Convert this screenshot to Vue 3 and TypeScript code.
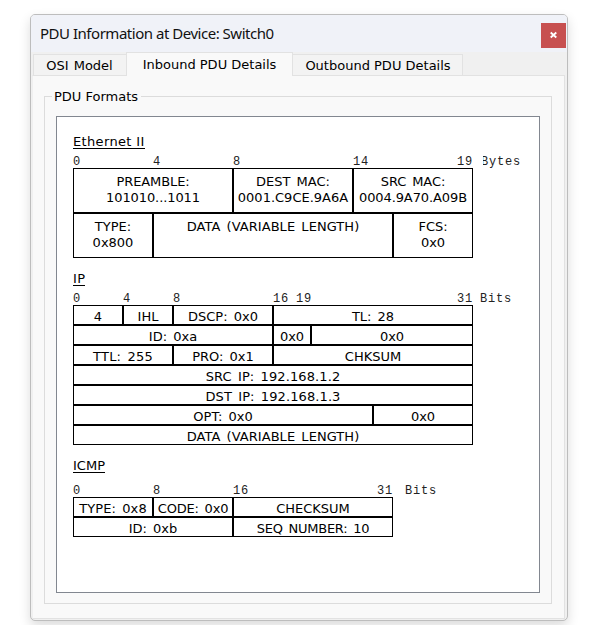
<script setup lang="ts">
interface Tick { label: string; width: number; clipped?: boolean }
interface Field { lines: string[]; width: number; spacing: number }
interface Format { name: string; key: string; ticks: Tick[]; rows: Field[][] }

const f = (text: string, width: number, spacing = 0): Field => ({ lines: text.split('|'), width, spacing })
const t = (label: string, width: number, clipped = false): Tick => ({ label, width, clipped })

const formats: Format[] = [
  {
    name: 'Ethernet II',
    key: 'ethernet',
    ticks: [t('0', 80), t('4', 80), t('8', 120), t('14', 104), t('19', 23), t('Bytes', 44, true)],
    rows: [
      [f('PREAMBLE:|101010...1011', 160, -0.1), f('DEST MAC:|0001.C9CE.9A6A', 120), f('SRC MAC:|0004.9A70.A09B', 120, -0.1)],
      [f('TYPE:|0x800', 80), f('DATA (VARIABLE LENGTH)', 240, 0.05), f('FCS:|0x0', 80)],
    ],
  },
  {
    name: 'IP',
    key: 'ip',
    ticks: [t('0', 50), t('4', 50), t('8', 100), t('16', 23), t('19', 161), t('31', 23), t('Bits', 40)],
    rows: [
      [f('4', 50), f('IHL', 50), f('DSCP: 0x0', 100), f('TL: 28', 200)],
      [f('ID: 0xa', 200), f('0x0', 38), f('0x0', 162)],
      [f('TTL: 255', 100, 0.2), f('PRO: 0x1', 100), f('CHKSUM', 200)],
      [f('SRC IP: 192.168.1.2', 400, 0.1)],
      [f('DST IP: 192.168.1.3', 400, 0.1)],
      [f('OPT: 0x0', 300), f('0x0', 100)],
      [f('DATA (VARIABLE LENGTH)', 400, 0.05)],
    ],
  },
  {
    name: 'ICMP',
    key: 'icmp',
    ticks: [t('0', 80), t('8', 80), t('16', 144), t('31', 28), t('Bits', 40)],
    rows: [
      [f('TYPE: 0x8', 80, 0.1), f('CODE: 0x0', 80, -0.2), f('CHECKSUM', 160)],
      [f('ID: 0xb', 160), f('SEQ NUMBER: 10', 160, -0.25)],
    ],
  },
]
</script>

<template>
  <main class="desktop">
    <section class="window">
      <header class="titlebar">
        <h1 class="title">PDU Information at Device: Switch0</h1>
        <button class="close" aria-label="Close">
          <svg width="25" height="25" viewBox="0 0 25 25"><path d="M9.7 9.5l5.6 5M15.3 9.5l-5.6 5" stroke="#fff" stroke-width="1.8" /></svg>
        </button>
      </header>
      <nav class="tabs">
        <span class="tab osi">OSI Model</span>
        <span class="tab inbound">Inbound PDU Details</span>
        <span class="tab outbound">Outbound PDU Details</span>
      </nav>
      <div class="pane">
        <div class="group">
          <div class="legend"><span class="legend-text">PDU Formats</span></div>
          <div class="group-body">
            <div class="sheet">
              <section v-for="fmt in formats" :key="fmt.key" :class="['format', fmt.key]">
                <h2 class="name"><span>{{ fmt.name }}</span></h2>
                <div class="ruler">
                  <span v-for="(tick, i) in fmt.ticks" :key="i" :class="['tick', { clipped: tick.clipped }]" :style="{ width: tick.width + 'px' }">{{ tick.label }}</span>
                </div>
                <div v-for="(row, r) in fmt.rows" :key="r" class="row">
                  <div v-for="(field, c) in row" :key="c" class="field" :style="{ width: field.width + 'px', letterSpacing: field.spacing + 'px' }">
                    <span v-for="line in field.lines" :key="line" class="line">{{ line }}</span>
                  </div>
                </div>
              </section>
            </div>
          </div>
        </div>
      </div>
    </section>
  </main>
</template>

<style>
body { background: #fff; overflow: hidden; }
</style>

<style scoped>
* { box-sizing: border-box; }
.desktop {
  width: 598px;
  height: 625px;
  padding: 14px 30px 4px;
  overflow: hidden;
  font: 13px/16px Verdana, "DejaVu Sans", sans-serif;
  color: #000;
}
.window {
  display: flex;
  flex-direction: column;
  width: 538px;
  height: 607px;
  border: 1px solid #bdbdbd;
  border-radius: 5px;
  background: #f0f0f0;
  box-shadow: 0 5px 12px rgba(0, 0, 0, 0.14);
  overflow: hidden;
}
.titlebar {
  display: flex;
  justify-content: space-between;
  height: 37px;
  flex: none;
  padding: 8px 1px 0 9px;
  background: #f0f2f8;
}
.title {
  margin: 0;
  font: 400 15px/20px "Segoe UI", "Noto Sans", sans-serif;
  white-space: nowrap;
  letter-spacing: -0.48px;
  color: #111;
}
.close {
  width: 25px;
  height: 25px;
  padding: 0;
  border: 0;
  background: #c75050;
}
.close svg { display: block; }
.tabs {
  display: flex;
  align-items: flex-end;
  flex: none;
  height: 23px;
  padding-left: 2px;
}
.tab {
  height: 21px;
  padding-top: 3px;
  border: 1px solid #e2e2e2;
  border-bottom: 0;
  background: #f3f3f3;
  text-align: center;
  white-space: nowrap;
}
.osi { width: 93px; padding-right: 1px; border-right: 0; word-spacing: 1px; }
.inbound {
  position: relative;
  z-index: 1;
  width: 167px;
  height: 24px;
  padding-top: 4px;
  margin-bottom: -1px;
  background: #f9f9f9;
}
.outbound { width: 170px; padding-left: 1px; border-left: 0; }
.pane {
  flex: 1;
  margin: 0 2px 1px 1px;
  padding: 12px 12px 14px 11px;
  border: 1px solid #e2e2e2;
  border-left-color: #f0f0f0;
  background: #f9f9f9;
}
.group { display: flex; flex-direction: column; width: 508px; height: 516px; }
.legend { display: flex; align-items: center; height: 16px; flex: none; }
.legend::before, .legend::after { content: ""; height: 1px; background: #dcdcdc; }
.legend::before { width: 8px; }
.legend::after { flex: 1; }
.legend-text { padding: 2px 3px 0 2px; white-space: nowrap; }
.group-body {
  flex: 1;
  margin-top: -7px;
  padding: 19px 11px 10px;
  border: 1px solid #dcdcdc;
  border-top: 0;
}
.sheet {
  width: 484px;
  height: 477px;
  padding: 17px 16px;
  border: 1px solid #828790;
  background: #fff;
}
.name {
  display: flex;
  margin: 0;
  height: 16px;
  font: inherit;
}
.name span { height: 15px; border-bottom: 1px solid #000; line-height: 16px; }
.ethernet .name { letter-spacing: 0.35px; }
.ruler {
  display: flex;
  height: 13px;
  margin-top: 5px;
  font: 12px/14px "Courier New", "Liberation Mono", monospace;
  letter-spacing: 0.8px;
  color: #222;
}
.tick { flex: none; overflow-x: clip; white-space: nowrap; }
.clipped { margin-left: 3px; text-indent: -2px; }
.ip { margin-top: 13px; }
.ip .name { letter-spacing: 0.4px; }
.icmp { margin-top: 13px; }
.icmp .ruler { margin-top: 10px; }
.row { display: flex; height: 20px; word-spacing: 2px; }
.ethernet .row { height: 45px; }
.field {
  display: flex;
  flex-direction: column;
  align-items: center;
  flex: none;
  padding-top: 3px;
  border: 1px solid #000;
}
.ethernet .field { padding-top: 5px; }
.line { height: 16px; white-space: nowrap; }
</style>
